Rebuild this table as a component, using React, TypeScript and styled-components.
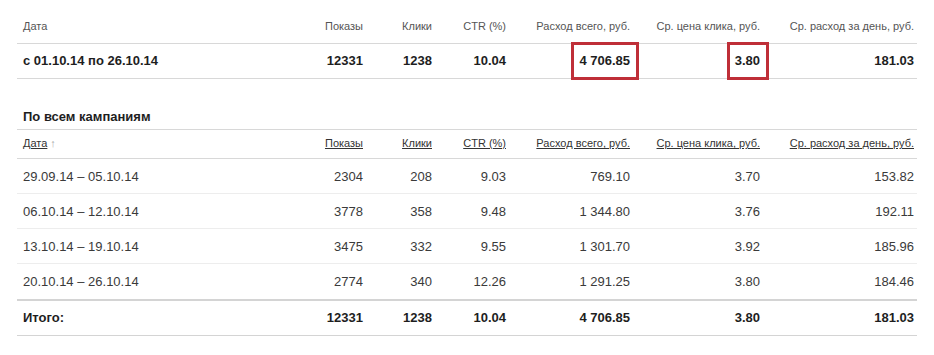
import React from "react";
import styled, { createGlobalStyle, css } from "styled-components";

const GlobalStyle = createGlobalStyle`
  html, body { margin: 0; padding: 0; background: #ffffff; }
  body { font-family: "Liberation Sans", Arial, sans-serif; color: #333; }
`;

const Page = styled.div`
  padding: 10px 17px 0 17px;
  width: 900px;
`;

const Table = styled.table`
  width: 900px;
  border-collapse: collapse;
  table-layout: fixed;
`;

const Col = styled.col<{ $w: number }>`
  width: ${(p) => p.$w}px;
`;

const HeadRow = styled.tr<{ $h: number }>`
  height: ${(p) => p.$h}px;
  border-bottom: 1px solid #d8d8d8;
`;

const HeadCell = styled.th<{ $left?: boolean; $link?: boolean }>`
  padding: 0 3px 0 6px;
  font-size: 11px;
  font-weight: normal;
  line-height: 13px;
  text-align: ${(p) => (p.$left ? "left" : "right")};
  vertical-align: middle;
  white-space: nowrap;
  color: ${(p) => (p.$link ? "#333" : "#555")};
`;

const HeadLink = styled.span`
  text-decoration: underline;
  text-underline-offset: 1px;
`;

const SortArrow = styled.span`
  color: #aaa;
  margin-left: 3px;
`;

type Variant = "light" | "strong" | "last" | "total";

const Row = styled.tr<{ $variant: Variant }>`
  height: 35px;
  ${(p) =>
    p.$variant === "light" &&
    css`
      border-bottom: 1px solid #ededed;
    `}
  ${(p) =>
    p.$variant === "strong" &&
    css`
      border-bottom: 1px solid #d8d8d8;
    `}
  ${(p) =>
    p.$variant === "last" &&
    css`
      height: 36px;
    `}
  ${(p) =>
    p.$variant === "total" &&
    css`
      border-top: 2px solid #d4d4d4;
      border-bottom: 1px solid #d4d4d4;
      height: 36px;
    `}
`;

const Cell = styled.td<{ $left?: boolean; $bold?: boolean }>`
  padding: 0 3px 0 6px;
  font-size: 13px;
  line-height: 15px;
  text-align: ${(p) => (p.$left ? "left" : "right")};
  vertical-align: middle;
  white-space: nowrap;
  font-weight: ${(p) => (p.$bold ? "bold" : "normal")};
  color: ${(p) => (p.$bold ? "#1e1e1e" : "#3a3a3a")};
`;

const Highlight = styled.span`
  position: relative;
  display: inline-block;
  &::after {
    content: "";
    position: absolute;
    top: -11px;
    bottom: -12px;
    left: -8px;
    right: -9px;
    border: 3px solid #bf2f38;
  }
`;

const Caption = styled.div`
  padding: 30px 6px 5px 6px;
  font-size: 13px;
  line-height: 15px;
  font-weight: bold;
  color: #1e1e1e;
  border-bottom: 1px solid #d8d8d8;
`;

const widths = [279, 70, 69, 74, 124, 130, 154];

const headers = [
  "Дата",
  "Показы",
  "Клики",
  "CTR (%)",
  "Расход всего, руб.",
  "Ср. цена клика, руб.",
  "Ср. расход за день, руб.",
];

const rows = [
  ["29.09.14 – 05.10.14", "2304", "208", "9.03", "769.10", "3.70", "153.82"],
  ["06.10.14 – 12.10.14", "3778", "358", "9.48", "1 344.80", "3.76", "192.11"],
  ["13.10.14 – 19.10.14", "3475", "332", "9.55", "1 301.70", "3.92", "185.96"],
  ["20.10.14 – 26.10.14", "2774", "340", "12.26", "1 291.25", "3.80", "184.46"],
];

const total = ["Итого:", "12331", "1238", "10.04", "4 706.85", "3.80", "181.03"];

const Cols = () => (
  <colgroup>
    {widths.map((w, i) => (
      <Col key={i} $w={w} />
    ))}
  </colgroup>
);

export default function App() {
  return (
    <>
      <GlobalStyle />
      <Page>
        <Table>
          <Cols />
          <thead>
            <HeadRow $h={33}>
              {headers.map((h, i) => (
                <HeadCell key={h} $left={i === 0}>
                  {h}
                </HeadCell>
              ))}
            </HeadRow>
          </thead>
          <tbody>
            <Row $variant="strong">
              <Cell $left $bold>
                с 01.10.14 по 26.10.14
              </Cell>
              <Cell $bold>12331</Cell>
              <Cell $bold>1238</Cell>
              <Cell $bold>10.04</Cell>
              <Cell $bold>
                <Highlight>4 706.85</Highlight>
              </Cell>
              <Cell $bold>
                <Highlight>3.80</Highlight>
              </Cell>
              <Cell $bold>181.03</Cell>
            </Row>
          </tbody>
        </Table>

        <Caption>По всем кампаниям</Caption>

        <Table>
          <Cols />
          <thead>
            <HeadRow $h={29}>
              {headers.map((h, i) => (
                <HeadCell key={h} $left={i === 0} $link>
                  <HeadLink>{h}</HeadLink>
                  {i === 0 && <SortArrow>↑</SortArrow>}
                </HeadCell>
              ))}
            </HeadRow>
          </thead>
          <tbody>
            {rows.map((r, ri) => (
              <Row key={ri} $variant={ri < rows.length - 1 ? "light" : "last"}>
                {r.map((v, i) => (
                  <Cell key={i} $left={i === 0}>
                    {v}
                  </Cell>
                ))}
              </Row>
            ))}
            <Row $variant="total">
              {total.map((v, i) => (
                <Cell key={i} $left={i === 0} $bold>
                  {v}
                </Cell>
              ))}
            </Row>
          </tbody>
        </Table>
      </Page>
    </>
  );
}
